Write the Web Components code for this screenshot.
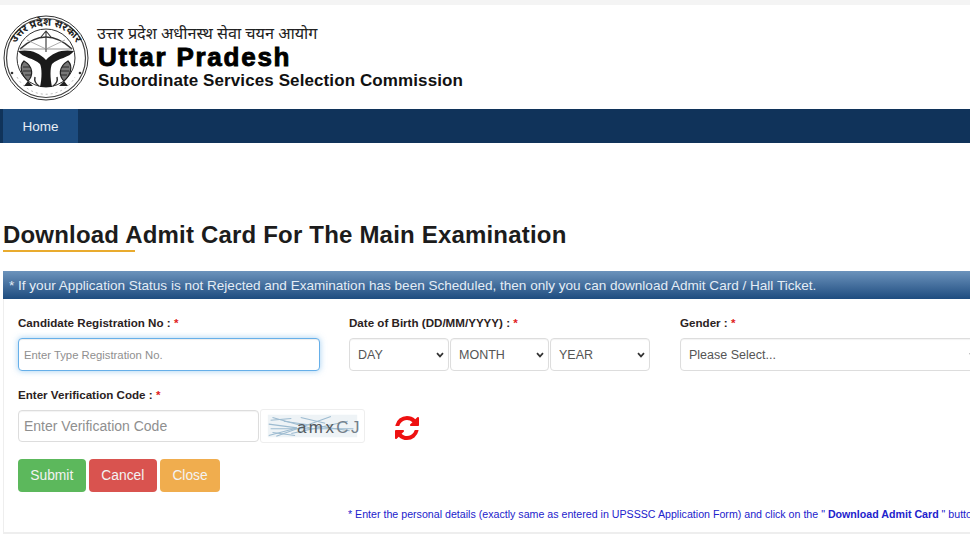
<!DOCTYPE html>
<html lang="en">
<head>
<meta charset="utf-8">
<title>Download Admit Card</title>
<style>
  html, body { margin: 0; padding: 0; background: #fff; overflow: hidden; }
  body { width: 970px; height: 545px; font-family: "Liberation Sans", Arial, sans-serif; }
</style>
</head>
<body>
<site-header></site-header>
<nav-bar><nav-link active>Home</nav-link></nav-bar>
<page-title>Download Admit Card For The Main Examination</page-title>
<admit-panel heading="* If your Application Status is not Rejected and Examination has been Scheduled, then only you can download Admit Card / Hall Ticket.">
  <form-row>
    <form-field label="Candidate Registration No :">
      <text-box placeholder="Enter Type Registration No." focused size="small"></text-box>
    </form-field>
    <form-field label="Date of Birth (DD/MM/YYYY) :">
      <dob-select></dob-select>
    </form-field>
    <form-field label="Gender :">
      <pick-box options="Please Select..."></pick-box>
    </form-field>
  </form-row>
  <captcha-row></captcha-row>
  <button-row>
    <ui-button kind="submit">Submit</ui-button>
    <ui-button kind="cancel">Cancel</ui-button>
    <ui-button kind="close">Close</ui-button>
  </button-row>
  <panel-note>* Enter the personal details (exactly same as entered in UPSSSC Application Form) and click on the " <b>Download Admit Card</b> " button.</panel-note>
</admit-panel>

<script>
class SiteHeader extends HTMLElement {
  constructor() {
    super();
    this.attachShadow({ mode: 'open' }).innerHTML = `
      <style>
        :host { display: block; border-top: 5px solid #f4f4f4; box-sizing: border-box; height: 109px; padding: 10px 0 0 3px; background: #fff; }
        .wrap { display: flex; align-items: flex-start; gap: 8px; }
        svg { width: 86px; height: 86px; flex: none; }
        .text { padding-top: 10px; color: #000; white-space: nowrap; }
        .hi { height: 20px; font: 16.2px/20px "Noto Sans Devanagari", "Lohit Devanagari", "Noto Serif Devanagari", "Noto Sans", "Liberation Serif", serif; color: #222; }
        .up { height: 25px; padding-left: 1px; font: bold 26px/24px "Liberation Sans", Arial, sans-serif; letter-spacing: 1.75px; -webkit-text-stroke: .9px #000; }
        .sub { padding-left: 1px; font: bold 17px/22px "Liberation Sans", Arial, sans-serif; color: #111; letter-spacing: .1px; }
      </style>
      <div class="wrap">
        <svg viewBox="0 0 86 86">
          <defs><path id="arc" d="M9 54 A35 35 0 1 1 77 54"/></defs>
          <circle cx="43" cy="43" r="42" fill="#fff" stroke="#333" stroke-width="1"/>
          <circle cx="43" cy="43" r="39.5" fill="none" stroke="#444" stroke-width="1.2"/>
          <circle cx="43" cy="43" r="29" fill="#fff" stroke="#333" stroke-width="1"/>
          <text font-size="10.5" font-weight="700" fill="#222" font-family="Noto Sans Devanagari, Noto Sans, Liberation Sans, sans-serif">
            <textPath href="#arc" startOffset="50%" text-anchor="middle">उत्तर प्रदेश सरकार</textPath>
          </text>
          <!-- bow and arrow -->
          <path d="M17 34 Q43 10 69 34" fill="none" stroke="#333" stroke-width="1.6"/>
          <path d="M17 34 L69 34" stroke="#777" stroke-width=".8"/>
          <path d="M43 17 V37 M38 22 L43 16 L48 22" fill="none" stroke="#333" stroke-width="1.1"/>
          <path d="M24 25 L43 34 L62 25" fill="none" stroke="#999" stroke-width=".8"/>
          <!-- ganga yamuna stem -->
          <path d="M15 36 C26 34 36 37 43 45 C50 37 60 34 71 36 C66 43 55 43 49 49 C47 53 47 63 49 72 L37 72 C39 63 39 53 37 49 C31 43 20 43 15 36 Z" fill="#1a1a1a"/>
          <!-- fish -->
          <path d="M21 46 C16 51 18 60 25 66 C30 61 31 52 21 46 Z M65 46 C70 51 68 60 61 66 C56 61 55 52 65 46 Z" fill="#777" stroke="#222" stroke-width="1.2"/>
          <path d="M20 52 H27 M20 56 H29 M22 60 H28 M66 52 H59 M66 56 H57 M64 60 H58" stroke="#222" stroke-width=".9"/>
          <path d="M25 66 L21 71 H30 Z M61 66 L65 71 H56 Z" fill="#222"/>
          <path d="M32 62 C31 66 33 69 36 71 M54 62 C55 66 53 69 50 71" fill="none" stroke="#333" stroke-width="1.5"/>
          <circle cx="9" cy="58" r="1.3" fill="#333"/><circle cx="77" cy="58" r="1.3" fill="#333"/>
          <path d="M14 62 A33 33 0 0 0 72 62" fill="none" stroke="#999" stroke-width=".7" stroke-dasharray="2 3"/>
        </svg>
        <div class="text">
          <div class="hi">उत्तर प्रदेश अधीनस्थ सेवा चयन आयोग</div>
          <div class="up">Uttar Pradesh</div>
          <div class="sub">Subordinate Services Selection Commission</div>
        </div>
      </div>`;
  }
}

class NavBar extends HTMLElement {
  constructor() {
    super();
    this.attachShadow({ mode: 'open' }).innerHTML = `
      <style>
        :host { display: flex; height: 34px; padding-left: 3px; background: #10335a; }
      </style>
      <slot></slot>`;
  }
}

class NavLink extends HTMLElement {
  constructor() {
    super();
    this.attachShadow({ mode: 'open' }).innerHTML = `
      <style>
        :host { display: flex; align-items: center; padding: 0 19.5px; color: #e8eef5; font: 13.5px "Liberation Sans", Arial, sans-serif; }
        :host([active]) { background: #1d4c7f; }
      </style>
      <slot></slot>`;
  }
}

class PageTitle extends HTMLElement {
  constructor() {
    super();
    this.attachShadow({ mode: 'open' }).innerHTML = `
      <style>
        :host { display: block; margin: 77px 0 19px 3px; color: #1c1c1c; font: bold 24px/30px "Liberation Sans", Arial, sans-serif; letter-spacing: .19px; white-space: nowrap; }
        .rule { width: 132px; height: 2px; background: #e9ab2e; }
      </style>
      <slot></slot>
      <div class="rule"></div>`;
  }
}

class AdmitPanel extends HTMLElement {
  static get observedAttributes() { return ['heading']; }
  constructor() {
    super();
    this.attachShadow({ mode: 'open' }).innerHTML = `
      <style>
        :host { display: block; width: 1400px; margin-left: 3px; box-sizing: border-box; height: 263px; border-left: 1px solid #eee; border-bottom: 2px solid #eee; }
        .head { height: 28px; margin-left: -1px; padding: 0 6px; display: flex; align-items: center; color: #e4edf6; font: 13.55px "Liberation Sans", Arial, sans-serif; white-space: nowrap; background: linear-gradient(#6c93bc, #1e4c7f); }
        .body { padding: 17px 14px 0; }
      </style>
      <div class="head"></div>
      <div class="body"><slot></slot></div>`;
  }
  attributeChangedCallback(name, old, value) {
    this.shadowRoot.querySelector('.head').textContent = value;
  }
}

class FormRow extends HTMLElement {
  constructor() {
    super();
    this.attachShadow({ mode: 'open' }).innerHTML = `
      <style>
        :host { display: grid; grid-template-columns: repeat(4, 331px); }
      </style>
      <slot></slot>`;
  }
}

class FormField extends HTMLElement {
  constructor() {
    super();
    this.attachShadow({ mode: 'open' }).innerHTML = `
      <style>
        :host { display: block; width: 302px; }
        label { display: block; height: 14px; margin-bottom: 8px; color: #2b2222; font: bold 11.6px/14px "Liberation Sans", Arial, sans-serif; white-space: nowrap; }
        span { color: #e01b1b; }
      </style>
      <label><b></b> <span>*</span></label>
      <slot></slot>`;
    this.shadowRoot.querySelector('b').textContent = this.getAttribute('label');
  }
}

class TextBox extends HTMLElement {
  constructor() {
    super();
    this.attachShadow({ mode: 'open' }).innerHTML = `
      <style>
        :host { display: block; height: 33px; }
        input { display: block; width: 100%; height: 100%; box-sizing: border-box; padding: 0 5px; border: 1px solid #ddd; border-radius: 4px; outline: none; background: #fff; color: #555; font: 14px "Liberation Sans", Arial, sans-serif; box-shadow: inset 0 1px 1px rgba(0,0,0,.05); }
        input::placeholder { color: #8f8f8f; opacity: 1; }
        :host([size="small"]) input { font-size: 11.3px; }
        :host([focused]) input { border-color: #66afe9; box-shadow: inset 0 1px 1px rgba(0,0,0,.075), 0 0 6px rgba(102,175,233,.6); }
      </style>
      <input type="text">`;
    this.shadowRoot.querySelector('input').placeholder = this.getAttribute('placeholder') || '';
  }
}

class PickBox extends HTMLElement {
  constructor() {
    super();
    this.attachShadow({ mode: 'open' }).innerHTML = `
      <style>
        :host { display: block; height: 33px; }
        select { display: block; width: 100%; height: 100%; box-sizing: border-box; padding: 0 8px; border: 1px solid #ddd; border-radius: 4px; color: #555; font: 12.5px "Liberation Sans", Arial, sans-serif; box-shadow: inset 0 1px 1px rgba(0,0,0,.05); appearance: none; -webkit-appearance: none; background: #fff url("data:image/svg+xml,%3Csvg xmlns='http://www.w3.org/2000/svg' width='8' height='6'%3E%3Cpath d='M1 1.2 L4 4.4 L7 1.2' fill='none' stroke='%23333' stroke-width='1.7'/%3E%3C/svg%3E") no-repeat right 4px center; }
      </style>
      <select></select>`;
    const select = this.shadowRoot.querySelector('select');
    (this.getAttribute('options') || '').split('|').forEach(text => {
      const option = document.createElement('option');
      option.textContent = text;
      select.append(option);
    });
  }
}

class DobSelect extends HTMLElement {
  constructor() {
    super();
    this.attachShadow({ mode: 'open' }).innerHTML = `
      <style>
        :host { display: grid; grid-template-columns: 100px 99px 100px; column-gap: 1px; width: 301px; }
      </style>
      <pick-box options="DAY"></pick-box>
      <pick-box options="MONTH"></pick-box>
      <pick-box options="YEAR"></pick-box>`;
  }
}

class CaptchaRow extends HTMLElement {
  constructor() {
    super();
    this.attachShadow({ mode: 'open' }).innerHTML = `
      <style>
        :host { display: block; margin-top: 17px; }
        label { display: block; height: 14px; margin-bottom: 7px; color: #2b2222; font: bold 11.6px/14px "Liberation Sans", Arial, sans-serif; }
        span { color: #e01b1b; }
        .line { display: flex; align-items: center; }
        text-box { width: 241px; height: 32px; }
        .img { width: 105px; height: 34px; margin-left: 1px; box-sizing: border-box; border: 1px solid #eee; border-radius: 3px; background: #fff; flex: none; display: block; }
        .refresh { width: 28px; height: 28px; margin: 4px 0 0 28px; flex: none; }
      </style>
      <label>Enter Verification Code : <span>*</span></label>
      <div class="line">
        <text-box placeholder="Enter Verification Code"></text-box>
        <svg class="img" viewBox="0 0 105 34">
          <rect x="5" y="5" width="95" height="24" fill="#eef3f6"/>
          <g fill="none" stroke="#9dbbd0" stroke-width="1.1">
            <path d="M6 15 L36 19 L6 27"/><path d="M10 8 L50 19 M14 28 L72 7"/>
            <path d="M22 12 L92 22 M30 25 L90 12"/><path d="M8 20 H96"/>
            <path d="M8 11 L30 9 M10 24 L34 27 M40 8 L66 14"/>
          </g>
          <text x="36" y="24" font-family="Liberation Sans, sans-serif" font-size="18" letter-spacing="2.6"><tspan fill="#55595c">amx</tspan><tspan fill="#74808a">CJ</tspan></text>
        </svg>
        <svg class="refresh" viewBox="0 0 1792 1792"><path fill="#ee1111" d="M1639 1056q0 5-1 7-64 268-268 434.5t-478 166.5q-146 0-282.5-55t-243.5-157l-129 129q-19 19-45 19t-45-19-19-45v-448q0-26 19-45t45-19h448q26 0 45 19t19 45-19 45l-137 137q71 66 161 102t187 36q134 0 250-65t186-179q11-17 53-117 8-23 30-23h192q13 0 22.5 9.5t9.5 22.5zm25-800v448q0 26-19 45t-45 19h-448q-26 0-45-19t-19-45 19-45l138-138q-148-137-349-137-134 0-250 65t-186 179q-11 17-53 117-8 23-30 23h-199q-13 0-22.5-9.5t-9.5-22.5v-7q65-268 270-434.5t480-166.5q146 0 284 55.5t245 156.5l130-129q19-19 45-19t45 19 19 45z"/></svg>
      </div>`;
  }
}

class ButtonRow extends HTMLElement {
  constructor() {
    super();
    this.attachShadow({ mode: 'open' }).innerHTML = `
      <style>
        :host { display: flex; gap: 3.5px; margin-top: 16px; }
      </style>
      <slot></slot>`;
  }
}

class UiButton extends HTMLElement {
  constructor() {
    super();
    this.attachShadow({ mode: 'open' }).innerHTML = `
      <style>
        :host { display: flex; align-items: center; height: 33px; padding: 0 12.3px; border-radius: 4px; color: #f3f3f3; font: 13.8px "Liberation Sans", Arial, sans-serif; }
        :host([kind="submit"]) { background: #5cb85c; }
        :host([kind="cancel"]) { background: #d9534f; }
        :host([kind="close"]) { background: #f0ad4e; }
      </style>
      <slot></slot>`;
  }
}

class PanelNote extends HTMLElement {
  constructor() {
    super();
    this.attachShadow({ mode: 'open' }).innerHTML = `
      <style>
        :host { display: block; margin: 15px 0 0 330px; color: #2222cc; font: 10.65px/14px "Liberation Sans", Arial, sans-serif; white-space: nowrap; }
      </style>
      <slot></slot>`;
  }
}

customElements.define('text-box', TextBox);
customElements.define('pick-box', PickBox);
customElements.define('dob-select', DobSelect);
customElements.define('site-header', SiteHeader);
customElements.define('nav-bar', NavBar);
customElements.define('nav-link', NavLink);
customElements.define('page-title', PageTitle);
customElements.define('admit-panel', AdmitPanel);
customElements.define('form-row', FormRow);
customElements.define('form-field', FormField);
customElements.define('captcha-row', CaptchaRow);
customElements.define('button-row', ButtonRow);
customElements.define('ui-button', UiButton);
customElements.define('panel-note', PanelNote);
</script>
</body>
</html>
